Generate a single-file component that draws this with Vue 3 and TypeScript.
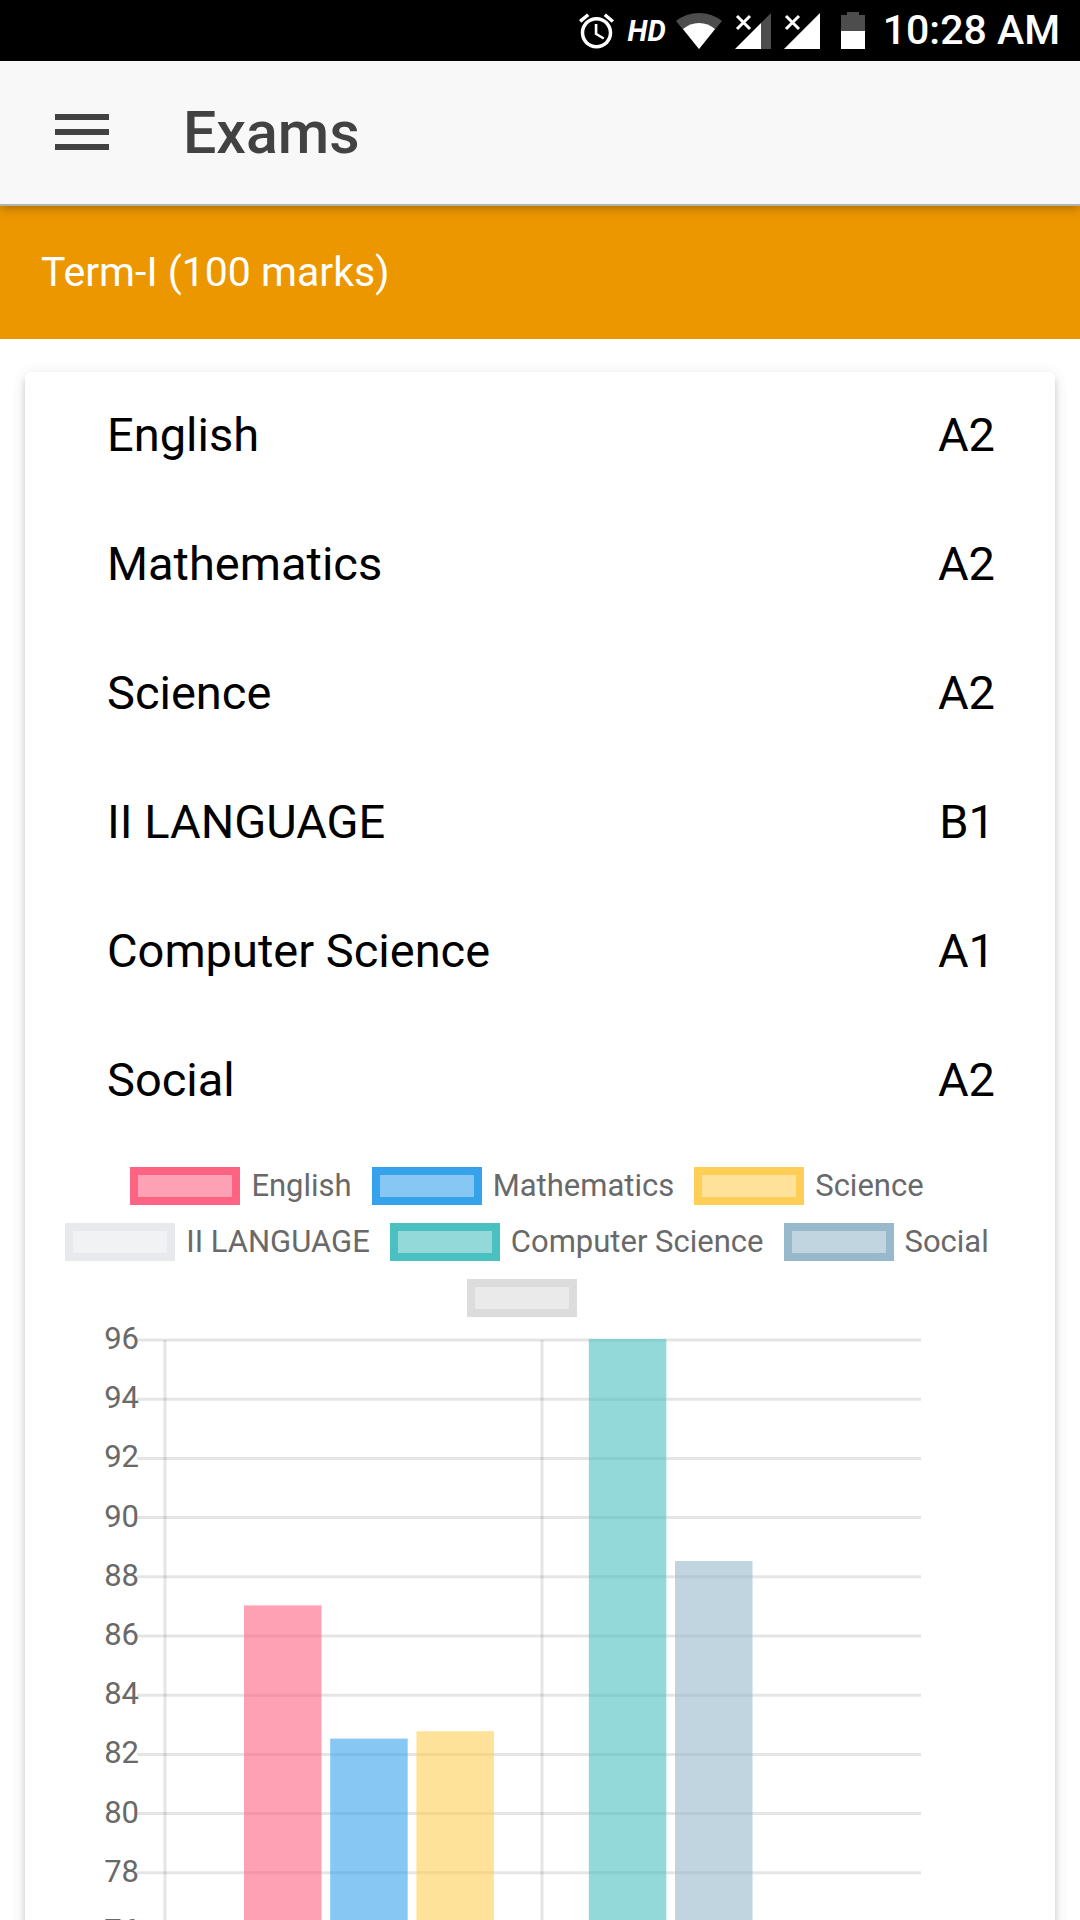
<script setup lang="ts">
interface Subject {
  name: string
  grade: string
}

interface Series {
  label: string
  color: string
  value: number | null
}

const subjects: Subject[] = [
  { name: 'English', grade: 'A2' },
  { name: 'Mathematics', grade: 'A2' },
  { name: 'Science', grade: 'A2' },
  { name: 'II LANGUAGE', grade: 'B1' },
  { name: 'Computer Science', grade: 'A1' },
  { name: 'Social', grade: 'A2' },
]

const series: Series[] = [
  { label: 'English', color: '#ff6384', value: 87 },
  { label: 'Mathematics', color: '#36a2eb', value: 82.5 },
  { label: 'Science', color: '#ffce56', value: 82.75 },
  { label: 'II LANGUAGE', color: '#e7e9ed', value: null },
  { label: 'Computer Science', color: '#4bc0c0', value: 96 },
  { label: 'Social', color: '#98b9cc', value: 88.5 },
  { label: '', color: '#dcdcdc', value: null },
]

// Chart geometry, in viewBox units
const chart = { width: 1030, height: 640, top: 23, left: 140, tickStart: 112, right: 896, max: 96, unit: 29.6 }
const barStart = 219
const barStep = 86.2
const barWidth = 77.5

const ticks: number[] = [96, 94, 92, 90, 88, 86, 84, 82, 80, 78, 76]
const columns: number[] = [140, 517]

const yOf = (value: number): number => chart.top + (chart.max - value) * chart.unit

// Bars begin at the upper edge of the grid line they reach
const bars = series
  .map((s, i) => ({ ...s, x: barStart + i * barStep }))
  .filter((s): s is Series & { x: number; value: number } => s.value !== null)
  .map((s) => ({ ...s, y: yOf(s.value) - 1 }))
</script>

<template>
  <div class="app">
    <div class="status">
      <svg class="alarm" viewBox="2 1.86 20 20.14" aria-hidden="true">
        <path
          d="M22 5.72l-4.6-3.86-1.29 1.53 4.6 3.86L22 5.72zM7.88 3.39L6.6 1.86 2 5.71l1.29 1.53 4.59-3.85zM12.5 8H11v6l4.75 2.85.75-1.23-4-2.37V8zM12 4c-4.97 0-9 4.03-9 9s4.02 9 9 9c4.97 0 9-4.03 9-9s-4.03-9-9-9zm0 16c-3.87 0-7-3.13-7-7s3.13-7 7-7 7 3.13 7 7-3.13 7-7 7z"
        />
      </svg>
      <span class="hd">HD</span>
      <svg class="wifi" viewBox="0 0 46 36" aria-hidden="true">
        <path class="dim" d="M23 36L0 8Q10 0 23 0T46 8z" />
        <path d="M23 36L7 16Q14 10 23 10T39 16z" />
      </svg>
      <svg class="signal" viewBox="0 0 36 36" aria-hidden="true">
        <path class="dim" d="M36 0V36H26V10z" />
        <path d="M26 10V36H0z" />
        <path class="cross" d="M2 3L15 16M15 3L2 16" />
      </svg>
      <svg class="signal" viewBox="0 0 36 36" aria-hidden="true">
        <path d="M36 0V36H0z" />
        <path class="cross" d="M2 3L15 16M15 3L2 16" />
      </svg>
      <svg class="battery" viewBox="0 0 24 37" aria-hidden="true">
        <path class="dim" d="M6 0H18V3H24V19H0V3H6z" />
        <path d="M0 19H24V37H0z" />
      </svg>
      <span class="clock">10:28 AM</span>
    </div>

    <header class="toolbar">
      <button class="menu" type="button" aria-label="Menu">
        <svg viewBox="0 0 54 36" aria-hidden="true">
          <path d="M0 0H54V6H0zM0 15H54V21H0zM0 30H54V36H0z" />
        </svg>
      </button>
      <h1 class="title">Exams</h1>
    </header>

    <main class="content">
      <h2 class="term">Term-I (100 marks)</h2>

      <section class="card">
        <table class="grades">
          <tbody>
            <tr v-for="s in subjects" :key="s.name">
              <th scope="row">{{ s.name }}</th>
              <td>{{ s.grade }}</td>
            </tr>
          </tbody>
        </table>

        <ul class="legend">
          <li v-for="s in series" :key="s.label">
            <svg class="swatch" viewBox="0 0 110 38" aria-hidden="true">
              <rect width="110" height="38" fill="#fff" />
              <rect width="110" height="38" :fill="s.color" fill-opacity="0.6" />
              <rect x="4" y="4" width="102" height="30" fill="none" :stroke="s.color" stroke-width="8" />
            </svg>
            <span>{{ s.label }}</span>
          </li>
        </ul>

        <svg class="chart" :viewBox="`0 0 ${chart.width} ${chart.height}`" role="img" aria-label="Marks by subject">
          <g class="grid">
            <line
              v-for="t in ticks"
              :key="t"
              :x1="chart.tickStart"
              :x2="chart.right"
              :y1="yOf(t)"
              :y2="yOf(t)"
            />
            <line v-for="x in columns" :key="x" :x1="x" :x2="x" :y1="chart.top" :y2="chart.height" />
          </g>
          <g class="labels">
            <text v-for="t in ticks" :key="t" x="114" :y="yOf(t) + 9">{{ t }}</text>
          </g>
          <rect
            v-for="b in bars"
            :key="b.label"
            :x="b.x"
            :y="b.y"
            :width="barWidth"
            :height="chart.height - b.y"
            :fill="b.color"
            fill-opacity="0.6"
          />
        </svg>
      </section>
    </main>
  </div>
</template>

<style>
body {
  margin: 0;
  background: #fff;
}
</style>

<style scoped>
.app {
  display: flex;
  flex-direction: column;
  height: 100vh;
  overflow: hidden;
  background: #fff;
  color: #000;
  font-family: Roboto, 'Liberation Sans', sans-serif;
}

.status {
  display: flex;
  flex: none;
  align-items: center;
  justify-content: flex-end;
  height: 61px;
  padding-right: 20px;
  background: #000;
  color: #fff;
}

.status svg {
  display: block;
  flex: none;
  fill: #fff;
}

.status .dim {
  fill: #4d4d4d;
}

.status .cross {
  fill: none;
  stroke: #fff;
  stroke-width: 3;
}

.alarm {
  width: 35px;
  height: 36px;
}

.hd {
  margin-left: 14px;
  font-size: 29px;
  font-style: italic;
  font-weight: 700;
}

.wifi {
  width: 46px;
  height: 36px;
  margin-left: 10px;
}

.signal {
  width: 36px;
  height: 36px;
  margin-left: 13px;
}

.battery {
  width: 24px;
  height: 37px;
  margin-left: 21px;
}

.clock {
  margin-left: 18px;
  font-size: 41px;
  font-weight: 500;
  line-height: 61px;
}

.toolbar {
  position: relative;
  z-index: 1;
  display: flex;
  flex: none;
  align-items: center;
  gap: 74px;
  height: 143px;
  padding: 0 55px;
  border-bottom: 2px solid #b2b2b2;
  background: #f8f8f8;
  box-shadow: 0 2px 10px rgba(0, 0, 0, 0.3);
  color: #424242;
}

.menu {
  padding: 0 0 2px;
  border: 0;
  background: none;
  color: inherit;
}

.menu svg {
  display: block;
  width: 54px;
  height: 36px;
  fill: currentColor;
}

.title {
  margin: 0;
  font-size: 59px;
  font-weight: 500;
}

.content {
  flex: 1;
  min-height: 0;
  overflow-y: auto;
  scrollbar-width: none;
}

.term {
  margin: 0;
  padding: 0 41px;
  background: #ec9700;
  color: #fff;
  font-size: 41px;
  font-weight: 400;
  line-height: 133px;
}

.card {
  margin: 33px 25px;
  border-radius: 6px;
  background: #fff;
  box-shadow:
    0 6px 6px rgba(0, 0, 0, 0.14),
    0 9px 3px -6px rgba(0, 0, 0, 0.2),
    0 3px 15px rgba(0, 0, 0, 0.12);
}

.grades {
  width: 100%;
  border-collapse: collapse;
  font-size: 47px;
  line-height: 125px;
}

.grades th,
.grades td {
  padding: 0 60px 4px 82px;
  font-weight: 400;
  text-align: left;
}

.grades td {
  padding-left: 0;
  text-align: right;
}

.legend {
  display: flex;
  flex-wrap: wrap;
  justify-content: center;
  gap: 18px 20px;
  margin: 0;
  padding: 21px 57px 0 31px;
  color: #696969;
  font-size: 31px;
  line-height: 38px;
  list-style: none;
}

.legend li {
  display: flex;
  gap: 11px;
}

.swatch {
  display: block;
  width: 110px;
  height: 38px;
}

.chart {
  display: block;
  width: 100%;
}

.grid line {
  stroke: #000;
  stroke-opacity: 0.1;
  stroke-width: 3;
}

.labels text {
  fill: #696969;
  font-size: 31px;
  text-anchor: end;
}
</style>
